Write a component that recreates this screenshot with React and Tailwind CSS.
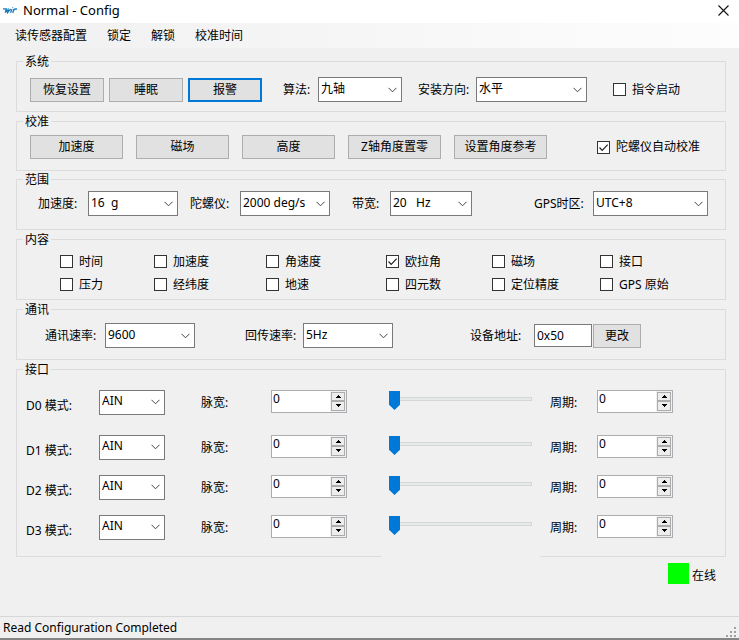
import { useId, useState } from 'react'
import clsx from 'clsx'

const MENU = ['读传感器配置', '锁定', '解锁', '校准时间']

const CALIBRATIONS = ['加速度', '磁场', '高度', 'Z轴角度置零', '设置角度参考']

const CONTENT = [
  { name: '时间' },
  { name: '加速度' },
  { name: '角速度' },
  { name: '欧拉角', checked: true },
  { name: '磁场' },
  { name: '接口' },
  { name: '压力' },
  { name: '经纬度' },
  { name: '地速' },
  { name: '四元数' },
  { name: '定位精度' },
  { name: 'GPS 原始' }
]

const PORTS = ['D0', 'D1', 'D2', 'D3']

const Group = ({ title, children }) => (
  <fieldset className="relative min-w-0 border border-[#dcdcdc]">
    <legend className="ml-1.5 h-4 px-0.5 leading-[18px]">{title}</legend>
    {children}
  </fieldset>
)

const Button = ({ children, active, className }) => (
  <button
    type="button"
    className={clsx(
      'h-6 bg-[#e1e1e1] leading-4 hover:bg-[#e5f1fb]',
      active ? 'border-2 border-[#0078d7]' : 'border border-[#adadad]',
      className
    )}
  >
    {children}
  </button>
)

const Select = ({ id, options, label, className }) => (
  <div className={clsx('grid shrink-0 items-center', className)}>
    <select
      id={id}
      aria-label={label}
      className="col-start-1 row-start-1 h-[25px] w-full appearance-none border border-[#7a7a7a] bg-white pb-0.5 pl-0.5 leading-5"
    >
      {options.map((option) => (
        <option key={option}>{option}</option>
      ))}
    </select>
    <svg
      viewBox="0 0 9 6"
      className="pointer-events-none col-start-1 row-start-1 mr-[5px] h-1.5 w-[9px] justify-self-end"
      fill="none"
      stroke="#444"
    >
      <path d="M0.5 0.8 4.5 4.8 8.5 0.8" />
    </svg>
  </div>
)

const Field = ({ label, options, labelClass, selectClass, className }) => {
  const id = useId()
  return (
    <div className={clsx('flex items-center', className)}>
      <label htmlFor={id} className={clsx('shrink-0 whitespace-nowrap', labelClass)}>
        {label}
      </label>
      <Select id={id} options={options} className={selectClass} />
    </div>
  )
}

const Checkbox = ({ label, checked, className }) => (
  <label className={clsx('flex items-center gap-1.5 whitespace-nowrap', className)}>
    <span className="grid size-[13px] shrink-0">
      <input
        type="checkbox"
        defaultChecked={checked}
        className="peer col-start-1 row-start-1 size-[13px] appearance-none border border-[#333] bg-white"
      />
      <svg
        viewBox="0 0 13 13"
        className="pointer-events-none col-start-1 row-start-1 hidden size-[13px] peer-checked:block"
        fill="none"
        stroke="#222"
        strokeWidth="1.2"
      >
        <path d="M2.5 6.5 5.2 9.3 10.7 3.6" />
      </svg>
    </span>
    {label}
  </label>
)

const Stepper = ({ label }) => {
  const [value, setValue] = useState(0)

  return (
    <div className="flex h-[23px] w-[76px] border border-[#abadb3] bg-white">
      <input
        type="number"
        aria-label={label}
        value={value}
        onChange={(e) => setValue(Number(e.target.value))}
        className="min-w-0 flex-1 appearance-none pb-1 pl-px leading-4 outline-none [-moz-appearance:textfield] [&::-webkit-inner-spin-button]:appearance-none"
      />
      <div className="flex flex-col bg-[#f0f0f0] p-px">
        <button
          type="button"
          aria-label={`${label} +`}
          onClick={() => setValue(value + 1)}
          className="flex w-3.5 flex-1 items-center justify-center border border-[#acacac] bg-[#ededed]"
        >
          <svg viewBox="0 0 5 3" className="h-[3px] w-[5px]" shapeRendering="crispEdges">
            <path d="M2 0h1v1h1v1h1v1H0V2h1V1h1z" />
          </svg>
        </button>
        <button
          type="button"
          aria-label={`${label} -`}
          onClick={() => setValue(value - 1)}
          className="flex w-3.5 flex-1 items-center justify-center border border-[#acacac] bg-[#ededed]"
        >
          <svg viewBox="0 0 5 3" className="h-[3px] w-[5px]" shapeRendering="crispEdges">
            <path d="M0 0h5v1H4v1H3v1H2V2H1V1H0z" />
          </svg>
        </button>
      </div>
    </div>
  )
}

const Slider = ({ label }) => (
  <input
    type="range"
    aria-label={label}
    defaultValue={0}
    className="block h-5 w-full appearance-none bg-transparent [&::-webkit-slider-runnable-track]:h-1 [&::-webkit-slider-runnable-track]:border [&::-webkit-slider-runnable-track]:border-[#d6d6d6] [&::-webkit-slider-runnable-track]:bg-[#e7eaea] [&::-webkit-slider-thumb]:-mt-[7px] [&::-webkit-slider-thumb]:-ml-px [&::-webkit-slider-thumb]:h-[19px] [&::-webkit-slider-thumb]:w-[11px] [&::-webkit-slider-thumb]:appearance-none [&::-webkit-slider-thumb]:bg-[#0078d7] [&::-webkit-slider-thumb]:[clip-path:polygon(0_0,100%_0,100%_72%,50%_100%,0_72%)]"
  />
)

const TitleBar = () => (
  <header className="flex h-[23px] items-center bg-white pr-2.5 pb-[3px] pl-[3px]">
    <svg viewBox="0 0 14 7" className="mr-1.5 h-[7px] w-3.5" fill="none" stroke="#1a7dbd" strokeWidth="1.3">
      <path d="M0 1.8h3.4L2.2 5.6 5 2.6 4.6 5.6 7.6 2" />
      <path d="M8.8 2.2 7.6 5.8M9.4 0.6h0.8M10.8 2 9.8 6M10.4 3.4 12 2h2" />
    </svg>
    <h1 className="text-[13px]">Normal - Config</h1>
    <button type="button" aria-label="关闭" className="ml-auto">
      <svg viewBox="0 0 11 11" className="size-[11px]" stroke="#111" strokeWidth="1.1">
        <path d="M0.5 0.5 10.5 10.5M10.5 0.5 0.5 10.5" />
      </svg>
    </button>
  </header>
)

const StatusBar = () => (
  <footer className="flex h-6 items-center justify-between border-t border-b-2 border-t-[#d7d7d7] border-b-[#858585] pr-0.5 pl-[3px]">
    <span>Read Configuration Completed</span>
    <svg viewBox="0 0 11 11" className="size-[11px] self-end" fill="#a0a0a0" shapeRendering="crispEdges">
      <path d="M8 0h2v2H8zM4 4h2v2H4zM8 4h2v2H8zM0 8h2v2H0zM4 8h2v2H4zM8 8h2v2H8z" />
    </svg>
  </footer>
)

const App = () => {
  return (
    <div className="flex min-h-screen flex-col bg-[#f0f0f0] font-['Noto_Sans','Noto_Sans_CJK_SC',sans-serif] text-[12px] leading-4 text-black">
      <TitleBar />
      <nav className="flex h-[25px] items-center gap-5 bg-linear-to-r from-[#f0f0f0] to-[#fdfdfd] pl-[15px]">
        {MENU.map((item) => (
          <button key={item} type="button">
            {item}
          </button>
        ))}
      </nav>

      <main className="flex-1 pt-[5px] pr-[13px] pl-4">
        <Group title="系统">
          <div className="flex items-center pt-2 pb-[9px] pl-[13px]">
            <div className="flex gap-[5px]">
              <Button className="w-[74px]">恢复设置</Button>
              <Button className="w-[74px]">睡眠</Button>
              <Button className="w-[74px]" active>
                报警
              </Button>
            </div>
            <Field
              label="算法:"
              options={['九轴', '六轴']}
              className="ml-[21px]"
              labelClass="w-[35px]"
              selectClass="w-[84px]"
            />
            <Field
              label="安装方向:"
              options={['水平', '垂直']}
              className="ml-4"
              labelClass="w-[58px]"
              selectClass="w-[111px]"
            />
            <Checkbox label="指令启动" className="ml-[26px]" />
          </div>
        </Group>

        <div className="mt-px">
          <Group title="校准">
            <div className="flex items-center pt-1.5 pb-[11px] pl-[13px]">
              <div className="flex gap-[13px]">
                {CALIBRATIONS.map((name) => (
                  <Button key={name} className="w-[93px]">
                    {name}
                  </Button>
                ))}
              </div>
              <Checkbox label="陀螺仪自动校准" className="ml-[50px]" checked />
            </div>
          </Group>
        </div>

        <Group title="范围">
          <div className="flex items-center pt-1 pr-[17px] pb-[13px] pl-[21px]">
            <Field
              label="加速度:"
              options={['16\u00a0\u00a0g', '8\u00a0\u00a0g', '4\u00a0\u00a0g', '2\u00a0\u00a0g']}
              labelClass="w-[50px]"
              selectClass="w-[90px]"
            />
            <Field
              label="陀螺仪:"
              options={['2000 deg/s', '1000 deg/s', '500 deg/s', '250 deg/s']}
              className="ml-3"
              labelClass="w-[50px]"
              selectClass="w-[90px]"
            />
            <Field
              label="带宽:"
              options={['20\u00a0\u00a0\u00a0Hz', '42\u00a0\u00a0\u00a0Hz', '98\u00a0\u00a0\u00a0Hz']}
              className="ml-[22px]"
              labelClass="w-[38px]"
              selectClass="w-[82px]"
            />
            <Field
              label="GPS时区:"
              options={['UTC+8', 'UTC+0', 'UTC-8']}
              className="ml-auto"
              labelClass="w-[59px]"
              selectClass="w-[115px]"
            />
          </div>
        </Group>

        <div className="mt-px">
          <Group title="内容">
            <div className="grid auto-rows-[23px] grid-cols-[94fr_112fr_120fr_106fr_108fr_125fr] items-center py-[3px] pl-[43px]">
              {CONTENT.map((item) => (
                <Checkbox key={item.name} label={item.name} checked={item.checked} />
              ))}
            </div>
          </Group>
        </div>

        <div className="mt-px">
          <Group title="通讯">
            <div className="flex items-center pt-1.5 pr-[84px] pb-[11px] pl-7">
              <Field
                label="通讯速率:"
                options={['9600', '115200', '230400']}
                labelClass="w-[60px]"
                selectClass="w-[90px]"
              />
              <Field
                label="回传速率:"
                options={['5Hz', '10Hz', '50Hz', '100Hz']}
                className="ml-[50px]"
                labelClass="w-[58px]"
                selectClass="w-[90px]"
              />
              <div className="ml-auto flex items-center">
                <label htmlFor="address" className="w-16 shrink-0">
                  设备地址:
                </label>
                <input
                  id="address"
                  type="text"
                  defaultValue="0x50"
                  className="mr-px h-[23px] w-[58px] border border-[#7a7a7a] bg-white pb-px pl-0.5"
                />
                <Button className="w-12">更改</Button>
              </div>
            </div>
          </Group>
        </div>

        <div className="mt-px">
          <Group title="接口">
            <div className="flex flex-col gap-[15px] pt-3 pr-[52px] pb-[17px] pl-[9px]">
              {PORTS.map((port) => (
                <div
                  key={port}
                  className="grid h-[25px] grid-cols-[73px_102px_70px_118px_1fr_47px_76px] items-center first:mb-[5px]"
                >
                  <label htmlFor={port} className="pt-2">
                    {port} 模式:
                  </label>
                  <Select id={port} options={['AIN', 'DIN', 'DOH', 'DOL', 'DOPWM']} className="w-[66px]" />
                  <span className="pt-0.5">脉宽:</span>
                  <div className="pb-0.5">
                    <Stepper label={`${port} 脉宽`} />
                  </div>
                  <div className="pr-[18px] pb-1.5">
                    <Slider label={`${port} 脉宽滑块`} />
                  </div>
                  <span className="pt-0.5">周期:</span>
                  <div className="pb-0.5">
                    <Stepper label={`${port} 周期`} />
                  </div>
                </div>
              ))}
            </div>
            {/* the slider area runs over the frame's bottom edge */}
            <div className="absolute right-[185px] -bottom-px left-[364px] h-px bg-[#f0f0f0]" />
          </Group>
        </div>

        <div className="flex items-center justify-end gap-[3px] pt-1.5 pr-2.5">
          <span className="size-[21px] bg-[#00ff00]" />
          <span className="pt-1">在线</span>
        </div>
      </main>

      <StatusBar />
    </div>
  )
}

export default App
